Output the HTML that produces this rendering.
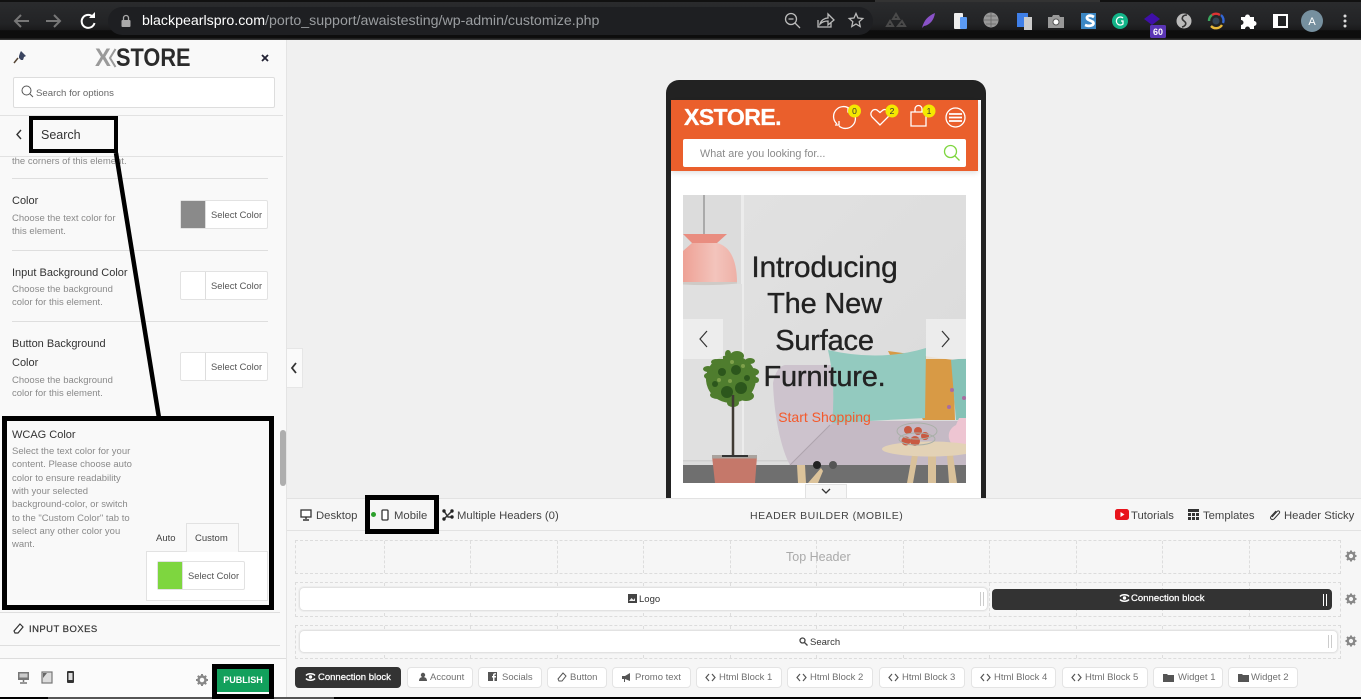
<!DOCTYPE html>
<html><head><meta charset="utf-8"><style>
html,body{margin:0;padding:0}
body{width:1361px;height:699px;overflow:hidden;position:relative;background:#f0f0f0;font-family:"Liberation Sans",sans-serif;color:#222}
.a,.t,svg.a{position:absolute}
.t{white-space:nowrap}
.h{font-size:11px;line-height:14px;color:#333;left:12px}
.d{font-size:9.5px;line-height:13px;color:#8a8a8a;left:12px}
.hr{position:absolute;left:12px;width:256px;height:1px;background:#dedede}
.sel{position:absolute;left:180px;width:86px;height:27px;background:#fff;border:1px solid #e2e2e2;border-radius:2px}
.sel i{position:absolute;left:0;top:0;width:24px;height:27px;border-right:1px solid #ddd}
.sel span{position:absolute;left:30px;top:7px;font-size:9.4px;line-height:13px;color:#555;white-space:nowrap}
.blk{position:absolute;border:4px solid #000;box-sizing:border-box}
.cell{position:absolute;top:0;bottom:0;border-left:1px dashed #ddd}
.row{position:absolute;left:295px;width:1046px;border:1px dashed #dcdcdc;box-sizing:border-box}
.chip{position:absolute;top:667px;height:21px;box-sizing:border-box;background:#fff;border:1px solid #e4e4e4;border-radius:4px;font-size:9.5px;line-height:19px;color:#707070;white-space:nowrap}
.chip svg{position:absolute;top:4px}
.chip span{position:absolute;top:0}
.tb{font-size:11.3px;line-height:14px;color:#444;top:509px}
.hd{font-size:30px;line-height:36px;color:#222;text-align:center;left:683px;width:283px;letter-spacing:-.2px;-webkit-text-stroke:.35px #222}
</style></head><body>

<!-- browser chrome -->
<div class="a" style="left:0;top:0;width:1361px;height:40px;background:linear-gradient(#2b2c2e 0,#222325 60%,#1a1a1b 75%,#0d0d0d 76%,#0d0d0d 96%,#333 97%)"></div>
<div class="a" style="left:0;top:0;width:1361px;height:2px;background:#111"></div>
<div class="a" style="left:875px;top:0;width:225px;height:2px;background:#333"></div>
<div class="a" style="left:108px;top:7px;width:765px;height:28px;border-radius:14px;background:#1e1f22"></div>
<svg class="a" style="left:10px;top:10px" width="90" height="22" viewBox="0 0 90 22" fill="none" stroke-width="2">
<path d="M19 11H6M11 5l-6 6 6 6" stroke="#777"/><path d="M36 11h13M44 5l6 6-6 6" stroke="#777"/>
<path d="M83 7a6.500 6.500 0 1 0 1.500 6" stroke="#fff"/><path d="M79 8h6V2z" fill="#fff"/></svg>
<svg class="a" style="left:120px;top:14px" width="12" height="14" viewBox="0 0 12 14"><rect x="1.500" y="6" width="9" height="7" rx="1" fill="#aaa"/><path d="M3.500 6V4a2.500 2.500 0 0 1 5 0v2" stroke="#aaa" fill="none" stroke-width="1.300"/></svg>
<div class="t" style="left:142px;top:13px;font-size:14.2px;line-height:17px;color:#fff">blackpearlspro.com<span style="color:#9a9da0">/porto_support/awaistesting/wp-admin/customize.php</span></div>
<svg class="a" style="left:782px;top:11px" width="85" height="20" viewBox="0 0 85 20" fill="none" stroke="#bbb" stroke-width="1.300">
<circle cx="9" cy="8" r="5.500"/><path d="M13 12l5 5M6.500 8h5"/><path d="M36 9v7h13v-4M38 13c1-4 5-6 8-6V3l6 6-6 5v-4c-3 0-6 1-8 3z"/>
<path d="M74 2.500l2 4.500 4.800.5-3.600 3.200 1 4.800-4.200-2.500-4.200 2.500 1-4.800-3.600-3.200 4.800-.5z"/></svg>
<!-- extensions -->
<svg class="a" style="left:885px;top:5px" width="476" height="34" viewBox="885 5 476 34">
<path d="M896 14l-3 5h6zM890 21l-3 5h6zM902 21l3 5h-7z" fill="none" stroke="#4a4a4a" stroke-width="2"/>
<path d="M922 28c2-8 6-12 13-15-1 7-5 12-11 13z" fill="#8a52c8"/>
<rect x="954" y="13" width="9" height="16" rx="1" fill="#eee"/><rect x="960" y="17" width="7" height="12" rx="1" fill="#5b9bf5"/>
<circle cx="991" cy="20" r="7.500" fill="#999"/><path d="M984 20h15M991 13v15M986 16h10M986 24h10" stroke="#666" stroke-width=".8"/>
<rect x="1017" y="13" width="11" height="14" fill="#3f7fe8"/><rect x="1024" y="17" width="8" height="13" fill="#ccc"/>
<path d="M1048 17h4l1-2h6l1 2h4v11h-16z" fill="#999"/><circle cx="1056" cy="22" r="3" fill="#fff" stroke="#555"/>
<rect x="1081" y="13" width="15" height="16" fill="#3b87c4"/><path d="M1094 17c-5-3-9 0-6 2.500l5 2.500c2 3-3 5-8 3" stroke="#fff" stroke-width="2.800" fill="none"/>
<circle cx="1120" cy="21" r="8" fill="#12b488"/><path d="M1123 18a4 4 0 1 0 0 6v-3h-2" stroke="#fff" fill="none" stroke-width="1.300"/>
<path d="M1152 13l8 6-8 6-8-6z" fill="#3f0fa8"/><rect x="1150" y="25" width="16" height="13" rx="1.500" fill="#5a35b5"/>
<circle cx="1184" cy="21" r="7.500" fill="#bbb"/><path d="M1187 15c-5 0-6 4-3 6s2 5-2 6" stroke="#333" stroke-width="1.600" fill="none"/>
<path d="M1209 21a7 7 0 0 1 3-6" stroke="#3ba55d" stroke-width="2.400" fill="none"/><path d="M1212 15a7 7 0 0 1 8 0" stroke="#d33" stroke-width="2.400" fill="none"/><path d="M1221 15a7 7 0 0 1 2 8" stroke="#3367d6" stroke-width="2.400" fill="none"/><path d="M1222 25a7 7 0 0 1-11 1" stroke="#e8b93a" stroke-width="2.400" fill="none"/><circle cx="1216" cy="21" r="3.500" fill="#345"/>
<path d="M1241 17h4a2.500 2.500 0 0 1 5 0h4v4a2.500 2.500 0 0 1 0 5v3h-4a2.500 2.500 0 0 0-5 0h-4v-4a2.500 2.500 0 0 0 0-5z" fill="#fff"/>
<rect x="1274" y="15" width="13" height="12" fill="none" stroke="#fff" stroke-width="2"/><rect x="1274" y="15" width="4" height="12" fill="#fff"/>
<circle cx="1312" cy="21" r="11" fill="#76909f"/>
<circle cx="1345" cy="16" r="1.500" fill="#ddd"/><circle cx="1345" cy="21" r="1.500" fill="#ddd"/><circle cx="1345" cy="26" r="1.500" fill="#ddd"/>
<text x="1158" y="35" font-family="Liberation Sans" font-size="9" font-weight="bold" fill="#fff" text-anchor="middle">60</text>
<text x="1312" y="25" font-family="Liberation Sans" font-size="11" fill="#fff" text-anchor="middle">A</text>
</svg>

<!-- sidebar -->
<div class="a" style="left:0;top:40px;width:287px;height:657px;background:#f9f9f9;border-right:1px solid #e4e4e4;box-sizing:border-box"></div>
<svg class="a" style="left:13px;top:50px" width="14" height="14" viewBox="0 0 14 14"><path d="M8 1l5 5-2 1-1 3-2 0-2-2 0-2 1-3z" fill="#3a4560"/><path d="M5 8L1 13" stroke="#543" stroke-width="1.500"/></svg>
<div class="t" style="left:95px;top:44px;font-size:25px;line-height:28px;font-weight:bold;color:#9a9a9a;transform:scaleX(.95);transform-origin:0 0">X</div>
<svg class="a" style="left:108px;top:48px" width="9" height="20" viewBox="0 0 9 20"><path d="M7.500 1L2 10l5.500 9" fill="none" stroke="#9a9a9a" stroke-width="2"/></svg>
<div class="t" style="left:116px;top:44px;font-size:25px;line-height:28px;font-weight:bold;color:#2b2b2b;transform:scaleX(.87);transform-origin:0 0">STORE</div>
<svg class="a" style="left:261px;top:54px" width="8" height="8" viewBox="0 0 8 8"><path d="M1 1l6 6M7 1L1 7" stroke="#223" stroke-width="1.800"/></svg>
<div class="a" style="left:13px;top:77px;width:262px;height:31px;background:#fff;border:1px solid #ddd;border-radius:2px;box-sizing:border-box"></div>
<svg class="a" style="left:21px;top:85px" width="13" height="13" viewBox="0 0 13 13" fill="none" stroke="#555"><circle cx="5.500" cy="5.500" r="4.500"/><path d="M9 9l3 3"/></svg>
<div class="t" style="left:36px;top:87px;font-size:9.600px;line-height:13px;color:#666">Search for options</div>
<div class="a" style="left:0;top:115px;width:283px;height:1px;background:#e2e2e2"></div>
<div class="a" style="left:0;top:156px;width:283px;height:1px;background:#e2e2e2"></div>
<svg class="a" style="left:15px;top:129px" width="8" height="11" viewBox="0 0 8 11"><path d="M6 1L2 5.500 6 10" fill="none" stroke="#333" stroke-width="1.400"/></svg>
<div class="t" style="left:41px;top:128px;font-size:12.500px;line-height:15px;color:#333">Search</div>
<div class="t d" style="top:155px;height:11px;overflow:hidden">the corners of this element.</div>
<div class="hr" style="top:178px"></div>

<div class="t h" style="top:194px">Color</div>
<div class="t d" style="top:212px">Choose the text color for</div>
<div class="t d" style="top:225px">this element.</div>
<div class="sel" style="top:200px"><i style="background:#8a8a8a"></i><span>Select Color</span></div>
<div class="hr" style="top:250px"></div>

<div class="t h" style="top:266px">Input Background Color</div>
<div class="t d" style="top:283px">Choose the background</div>
<div class="t d" style="top:296px">color for this element.</div>
<div class="sel" style="top:271px"><i></i><span>Select Color</span></div>
<div class="hr" style="top:321px"></div>

<div class="t h" style="top:337px">Button Background</div>
<div class="t h" style="top:356px">Color</div>
<div class="t d" style="top:374px">Choose the background</div>
<div class="t d" style="top:387px">color for this element.</div>
<div class="sel" style="top:352px"><i></i><span>Select Color</span></div>

<div class="t h" style="top:428px">WCAG Color</div>
<div class="t d" style="top:445px">Select the text color for your</div>
<div class="t d" style="top:458px">content. Please choose auto</div>
<div class="t d" style="top:472px">color to ensure readability</div>
<div class="t d" style="top:485px">with your selected</div>
<div class="t d" style="top:498px">background-color, or switch</div>
<div class="t d" style="top:512px">to the "Custom Color" tab to</div>
<div class="t d" style="top:525px">select any other color you</div>
<div class="t d" style="top:538px">want.</div>
<div class="t" style="left:156px;top:532px;font-size:9.500px;line-height:13px;color:#444">Auto</div>
<div class="a" style="left:186px;top:523px;width:53px;height:29px;box-sizing:border-box;border:1px solid #e2e2e2;border-bottom:0;background:#f9f9f9"></div>
<div class="t" style="left:195px;top:532px;font-size:9.500px;line-height:13px;color:#444">Custom</div>
<div class="a" style="left:146px;top:551px;width:122px;height:50px;box-sizing:border-box;background:#fff;border:1px solid #e2e2e2"></div>
<div class="a" style="left:187px;top:551px;width:51px;height:1px;background:#f9f9f9"></div>
<div class="sel" style="left:157px;top:561px"><i style="background:#7ed63f"></i><span>Select Color</span></div>

<div class="a" style="left:0;top:612px;width:280px;height:1px;background:#dedede"></div>
<svg class="a" style="left:13px;top:623px" width="11" height="11" viewBox="0 0 11 11"><path d="M7 1l3 3-5 6-3 0-1-2z" fill="#fff" stroke="#333" stroke-width="1.200"/></svg>
<div class="t" style="left:29px;top:623px;font-size:9.500px;line-height:13px;letter-spacing:.45px;color:#333;-webkit-text-stroke:.2px #333">INPUT BOXES</div>
<div class="a" style="left:0;top:645px;width:280px;height:1px;background:#dedede"></div>
<div class="a" style="left:280px;top:430px;width:6px;height:56px;border-radius:3px;background:#aeaeae"></div>
<!-- sidebar footer -->
<div class="a" style="left:0;top:658px;width:286px;height:39px;background:#fbfbfb;border-top:1px solid #ddd;box-sizing:border-box"></div>
<svg class="a" style="left:16px;top:670px" width="62" height="16" viewBox="0 0 62 16"><rect x="2" y="2" width="11" height="8" fill="#777"/><rect x="3.500" y="3.500" width="8" height="4" fill="#ccc"/><path d="M7.500 10v2M4 13h7" stroke="#777" stroke-width="1.500"/><rect x="26" y="2" width="10" height="11" fill="#ddd" stroke="#777" stroke-width="1.200"/><path d="M27 8l4-5h-4z" fill="#666"/><rect x="51" y="1" width="7" height="12" rx="1" fill="#333"/><rect x="52.500" y="3" width="4" height="7" fill="#ddd"/></svg>
<svg class="a" style="left:195px;top:673px" width="14" height="14" viewBox="0 0 14 14"><circle cx="7" cy="7" r="3.500" fill="none" stroke="#888" stroke-width="2.500"/><path d="M7 1v2.500M7 10.500V13M1 7h2.500M10.500 7H13M2.800 2.800l1.700 1.700M9.500 9.500l1.700 1.700M11.200 2.800L9.500 4.500M4.500 9.500l-1.700 1.700" stroke="#888" stroke-width="2"/></svg>
<div class="a" style="left:217px;top:669px;width:52px;height:23px;background:#12a05c"></div>
<div class="t" style="left:217px;top:669px;width:52px;text-align:center;font-size:9px;line-height:23px;font-weight:bold;color:#fff">PUBLISH</div>
<!-- collapse tab -->
<div class="a" style="left:287px;top:348px;width:16px;height:40px;background:#fafafa;border:1px solid #e6e6e6;border-left:0;box-sizing:border-box"></div>
<svg class="a" style="left:290px;top:362px" width="8" height="12" viewBox="0 0 8 12"><path d="M6 1L2 6l4 5" fill="none" stroke="#333" stroke-width="1.800"/></svg>

<!-- phone -->
<div class="a" style="left:666px;top:80px;width:320px;height:418px;background:#222;border-radius:13px 13px 0 0"></div>
<div class="a" style="left:671px;top:100px;width:310px;height:398px;background:#fff"></div>
<div class="a" style="left:671px;top:100px;width:307px;height:71px;background:#ea5f2c;box-shadow:0 2px 5px rgba(0,0,0,.12)"></div>
<div class="t" style="left:684px;top:103px;font-size:23px;line-height:28px;font-weight:bold;color:#fff;letter-spacing:-.5px;-webkit-text-stroke:.3px #fff">XSTORE.</div>
<svg class="a" style="left:830px;top:103px" width="140" height="28" viewBox="830 103 140 28" fill="none" stroke="#fff" stroke-width="1.300">
<path d="M837 124a8.500 8.500 0 0 1 13-15M852 111a8.500 8.500 0 0 1-13 15M839 121v4h-4M848 108v4h5"/>
<path d="M880 125l-8-8c-3-4 1-9 5-7l3 2.500 3-2.500c4-2 8 3 5 7z"/>
<path d="M911 112h15v14h-15zM915 112v-3a3.500 3.500 0 0 1 7 0v3"/>
<circle cx="955.500" cy="117.500" r="9.500"/><path d="M949 114h13M949 117.500h13M949 121h13" stroke-width="1.800"/>
<circle cx="854.500" cy="111" r="6.500" fill="#f4e800" stroke="none"/><circle cx="892" cy="111" r="6.500" fill="#f4e800" stroke="none"/><circle cx="929" cy="111" r="6.500" fill="#f4e800" stroke="none"/>
<g font-family="Liberation Sans" font-size="8.500" fill="#333" stroke="none" text-anchor="middle"><text x="854.500" y="114">0</text><text x="892" y="114">2</text><text x="929" y="114">1</text></g></svg>
<div class="a" style="left:683px;top:139px;width:283px;height:28px;background:#fff;border-radius:2px"></div>
<div class="t" style="left:700px;top:147px;font-size:10.800px;line-height:14px;color:#8a8a8a">What are you looking for...</div>
<svg class="a" style="left:943px;top:144px" width="18" height="18" viewBox="0 0 18 18" fill="none" stroke="#7ed63f" stroke-width="1.300"><circle cx="7.500" cy="7.500" r="6"/><path d="M12 12l4.500 4.500"/></svg>

<!-- hero -->
<svg class="a" style="left:683px;top:195px" width="283" height="288" viewBox="683 195 283 288">
<defs><linearGradient id="w" x1="0" y1="0" x2="1" y2="1"><stop offset="0" stop-color="#e2e2e2"/><stop offset="1" stop-color="#dadada"/></linearGradient>
<linearGradient id="l" x1="0" x2="1"><stop offset="0" stop-color="#eea195"/><stop offset=".6" stop-color="#f3c4bc"/><stop offset="1" stop-color="#eeb0a6"/></linearGradient></defs>
<rect x="683" y="195" width="283" height="288" fill="url(#w)"/>
<rect x="683" y="195" width="59" height="270" fill="#dcdcdc"/><rect x="741" y="195" width="3" height="270" fill="#ececec"/>
<rect x="683" y="284" width="59" height="176" fill="#e0e0e0"/>
<rect x="683" y="460" width="110" height="1.500" fill="#cfcfcf"/>
<path d="M704 195v40" stroke="#777"/>
<path d="M683 234h44l-10 9h-25z" fill="#e98d80"/><path d="M692 243h25c12 3 20 15 20 40h-54v-32z" fill="url(#l)"/><path d="M683 282h54v1.500c-18 2-36 2-54 1z" fill="#cfcac6"/>
<!-- floor -->
<rect x="683" y="465" width="283" height="18" fill="#6f6f6f"/>
<!-- plant -->
<g fill="#4f7d2e">
<ellipse cx="731" cy="379" rx="25" ry="24"/><ellipse cx="712" cy="376" rx="8" ry="4"/><ellipse cx="708" cy="369" rx="5" ry="3"/><ellipse cx="752" cy="372" rx="7" ry="4"/><ellipse cx="756" cy="380" rx="3" ry="3"/><ellipse cx="737" cy="356" rx="7" ry="5"/><ellipse cx="728" cy="354" rx="3" ry="4"/><ellipse cx="718" cy="395" rx="8" ry="4"/><ellipse cx="746" cy="396" rx="8" ry="5"/><ellipse cx="733" cy="403" rx="6" ry="4"/><ellipse cx="716" cy="362" rx="5" ry="3"/><ellipse cx="750" cy="361" rx="5" ry="3"/></g>
<g fill="#2c561c"><circle cx="727" cy="392" r="6"/><circle cx="741" cy="388" r="6"/><circle cx="722" cy="372" r="4"/><circle cx="736" cy="370" r="5"/><circle cx="747" cy="378" r="3"/><circle cx="715" cy="384" r="3"/></g>
<g fill="#7ea04a"><circle cx="732" cy="362" r="2"/><circle cx="743" cy="366" r="2"/><circle cx="719" cy="380" r="2"/><circle cx="730" cy="381" r="2"/></g>
<path d="M733 395v63" stroke="#3f3a33" stroke-width="2.500"/>
<path d="M712 456h45l-2 27h-40z" fill="#c5786a"/><rect x="712" y="455" width="45" height="3.500" fill="#a9a39e"/><rect x="722" y="455" width="26" height="2" fill="#333"/>
<!-- sofa -->
<path d="M773 383c2-10 6-17 12-18h46l5 56h130v44H790c-9-16-16-50-17-82z" fill="#cdc3cd"/>
<path d="M830 425l-40 40h176v-44H836z" fill="#c5bac5"/><path d="M830 425l-40 40" stroke="#aea3ad"/>
<path d="M797 465h8l1 18h-8zM808 483l13-15 2 3-5 12z" fill="#dcc39a"/>
<path d="M888 351l65 9 2 60h-32z" fill="#d89a45"/>
<path d="M828 350Q880 362 926 348L925 418 832 423Q836 385 828 350z" fill="#93cabf"/>
<path d="M951 360l15-2v62h-10z" fill="#85c2b6"/>
<!-- vase -->
<path d="M959 418h7v28h-11c-8-4-9-16 1-21z" fill="#eec5d2"/>
<g fill="#a86ca0"><circle cx="952" cy="390" r="2"/><circle cx="949" cy="407" r="2"/><circle cx="964" cy="398" r="2"/></g>
<!-- table -->
<path d="M912 455h6l-5 28h-6zM947 455h6l4 28h-8zM928 455h8v28h-8z" fill="#d9c19a"/>
<ellipse cx="930" cy="449" rx="48" ry="7.500" fill="#e3d2b6"/>
<!-- fruit -->
<g fill="#c85a42"><circle cx="906" cy="441" r="4.500"/><circle cx="915" cy="441" r="5"/><circle cx="925" cy="436" r="4"/><circle cx="908" cy="430" r="4"/><circle cx="918" cy="431" r="4"/></g>
<ellipse cx="917" cy="431" rx="20" ry="8" fill="none" stroke="#a9b0a8"/><ellipse cx="917" cy="439" rx="18" ry="6" fill="none" stroke="#a9b0a8"/>
<!-- nav -->
<rect x="683" y="319" width="40" height="40" fill="#eee" opacity=".85"/><rect x="926" y="319" width="40" height="40" fill="#eee" opacity=".85"/>
<path d="M707 331l-7 8 7 8M942 331l7 8-7 8" fill="none" stroke="#333" stroke-width="1.200"/>
<circle cx="817" cy="465" r="4" fill="#222"/><circle cx="833" cy="465" r="4" fill="#555"/>
</svg>
<div class="t hd" style="top:250px">Introducing</div>
<div class="t hd" style="top:286px;font-size:29px">The New</div>
<div class="t hd" style="top:323px;font-size:29px">Surface</div>
<div class="t hd" style="top:359px;font-size:29px">Furniture.</div>
<div class="t" style="left:683px;width:283px;top:408px;text-align:center;font-size:14px;line-height:18px;color:#f4592b">Start Shopping</div>
<div class="a" style="left:805px;top:484px;width:42px;height:15px;background:#f7f7f7;border:1px solid #e2e2e2;box-sizing:border-box"></div>
<svg class="a" style="left:821px;top:488px" width="10" height="7" viewBox="0 0 10 7"><path d="M1 1l4 4 4-4" fill="none" stroke="#333" stroke-width="1.300"/></svg>

<!-- builder -->
<div class="a" style="left:287px;top:498px;width:1074px;height:199px;background:#f6f6f6;border-top:1px solid #e2e2e2;box-sizing:border-box"></div>
<div class="a" style="left:287px;top:530px;width:1074px;height:1px;background:#e2e2e2"></div>
<svg class="a" style="left:300px;top:508px" width="12" height="14" viewBox="0 0 12 14"><rect x="1" y="2" width="10" height="7" fill="#fff" stroke="#333" stroke-width="1.300"/><path d="M6 9v2M3 12h6" stroke="#333" stroke-width="1.400"/></svg>
<div class="t tb" style="left:316px">Desktop</div>
<div class="a" style="left:371px;top:512px;width:5px;height:5px;border-radius:50%;background:#2ca02c"></div>
<svg class="a" style="left:381px;top:509px" width="8" height="12" viewBox="0 0 8 12"><rect x="1" y="1" width="6" height="10" rx="1" fill="#fff" stroke="#333" stroke-width="1.300"/></svg>
<div class="t tb" style="left:394px">Mobile</div>
<svg class="a" style="left:442px;top:509px" width="12" height="12" viewBox="0 0 12 12"><path d="M2 2l4 6h4M2 10l8-8" stroke="#333" stroke-width="1.500" fill="none"/><circle cx="2" cy="2" r="1.700" fill="#222"/><circle cx="2" cy="10" r="1.700" fill="#222"/><circle cx="10" cy="2" r="1.700" fill="#222"/><circle cx="10" cy="8" r="1.700" fill="#222"/></svg>
<div class="t tb" style="left:457px">Multiple Headers (0)</div>
<div class="t tb" style="left:750px;letter-spacing:.5px;font-size:10.500px">HEADER BUILDER (MOBILE)</div>
<svg class="a" style="left:1115px;top:509px" width="14" height="11" viewBox="0 0 14 11"><rect width="14" height="11" rx="2.500" fill="#e8141c"/><path d="M5.500 3l4 2.500-4 2.500z" fill="#fff"/></svg>
<div class="t tb" style="left:1131px">Tutorials</div>
<svg class="a" style="left:1188px;top:509px" width="11" height="11" viewBox="0 0 11 11" fill="#333"><rect width="11" height="3"/><rect y="4" width="3" height="3"/><rect x="4" y="4" width="3" height="3"/><rect x="8" y="4" width="3" height="3"/><rect y="8" width="3" height="3"/><rect x="4" y="8" width="3" height="3"/><rect x="8" y="8" width="3" height="3"/></svg>
<div class="t tb" style="left:1203px">Templates</div>
<svg class="a" style="left:1269px;top:509px" width="12" height="12" viewBox="0 0 12 12"><path d="M3 8l5-5.500c2-1.500 3.500.5 2 2L5 10c-2 1.500-4.500-.5-3-2.500L7 2" fill="none" stroke="#333"/></svg>
<div class="t tb" style="left:1284px">Header Sticky</div>

<!-- rows -->
<div class="row" style="top:540px;height:34px"><i class="cell" style="left:88px"></i><i class="cell" style="left:174px"></i><i class="cell" style="left:261px"></i><i class="cell" style="left:347px"></i><i class="cell" style="left:434px"></i><i class="cell" style="left:520px"></i><i class="cell" style="left:607px"></i><i class="cell" style="left:693px"></i><i class="cell" style="left:780px"></i><i class="cell" style="left:866px"></i><i class="cell" style="left:953px"></i></div>
<div class="t" style="left:786px;top:550px;font-size:12.500px;line-height:15px;color:#aaa">Top Header</div>
<div class="row" style="top:582px;height:35px"><i class="cell" style="left:88px"></i><i class="cell" style="left:174px"></i><i class="cell" style="left:261px"></i><i class="cell" style="left:347px"></i><i class="cell" style="left:434px"></i><i class="cell" style="left:520px"></i><i class="cell" style="left:607px"></i><i class="cell" style="left:693px"></i><i class="cell" style="left:780px"></i><i class="cell" style="left:866px"></i><i class="cell" style="left:953px"></i></div>
<div class="row" style="top:625px;height:34px"><i class="cell" style="left:88px"></i><i class="cell" style="left:174px"></i><i class="cell" style="left:261px"></i><i class="cell" style="left:347px"></i><i class="cell" style="left:434px"></i><i class="cell" style="left:520px"></i><i class="cell" style="left:607px"></i><i class="cell" style="left:693px"></i><i class="cell" style="left:780px"></i><i class="cell" style="left:866px"></i><i class="cell" style="left:953px"></i></div>

<div class="a" style="left:299px;top:587px;width:689px;height:24px;background:#fff;border:1px solid #e2e2e2;border-radius:5px;box-sizing:border-box;box-shadow:0 0 0 1px #eee"></div>
<svg class="a" style="left:628px;top:594px" width="9" height="9" viewBox="0 0 9 9"><rect width="9" height="9" fill="#444"/><path d="M1 7l2.500-3 2 2L7 4v3z" fill="#eee"/></svg>
<div class="t" style="left:639px;top:593px;font-size:9.500px;line-height:13px;color:#333">Logo</div>
<div class="a" style="left:980px;top:592px;width:4px;height:14px;border-left:1px solid #ccc;border-right:1px solid #ccc;box-sizing:border-box"></div>
<div class="a" style="left:992px;top:589px;width:340px;height:21px;background:#333;border-radius:4px"></div>
<svg class="a" style="left:1119px;top:593px" width="11" height="10" viewBox="0 0 11 10"><path d="M1 3.500a5 3 0 0 1 9 0M10 6.500a5 3 0 0 1-9 0" fill="none" stroke="#fff" stroke-width="1.500"/><circle cx="5.500" cy="5" r="1.700" fill="#fff"/></svg>
<div class="t" style="left:1131px;top:592px;font-size:9.500px;line-height:13px;color:#fff;letter-spacing:.04px;-webkit-text-stroke:.25px #fff">Connection block</div>
<div class="a" style="left:1323px;top:594px;width:4px;height:12px;border-left:1px solid #fff;border-right:1px solid #fff;box-sizing:border-box"></div>

<div class="a" style="left:299px;top:630px;width:1039px;height:23px;background:#fff;border:1px solid #e2e2e2;border-radius:5px;box-sizing:border-box;box-shadow:0 0 0 1px #eee"></div>
<svg class="a" style="left:799px;top:637px" width="9" height="9" viewBox="0 0 9 9" fill="none" stroke="#444" stroke-width="1.300"><circle cx="3.500" cy="3.500" r="2.500"/><path d="M5.500 5.500l3 3"/></svg>
<div class="t" style="left:810px;top:636px;font-size:9.500px;line-height:13px;color:#333">Search</div>
<div class="a" style="left:1328px;top:635px;width:4px;height:13px;border-left:1px solid #ccc;border-right:1px solid #ccc;box-sizing:border-box"></div>

<svg class="a" style="left:1344px;top:549px" width="14" height="100" viewBox="0 0 14 100">
<defs><g id="g"><circle cx="7" cy="7" r="3.300" fill="none" stroke="#888" stroke-width="2.400"/><path d="M7 1.500v2M7 10.500v2M1.500 7h2M10.500 7h2M3 3l1.500 1.500M9.500 9.500L11 11M11 3L9.500 4.500M4.500 9.500L3 11" stroke="#888" stroke-width="2"/></g></defs>
<use href="#g"/><use href="#g" y="43"/><use href="#g" y="85"/></svg>

<!-- chips -->
<div class="chip" style="left:295px;width:106px;background:#333;border-color:#333;color:#fff;-webkit-text-stroke:.25px #fff"><svg style="left:9px" width="11" height="10" viewBox="0 0 11 10"><path d="M1 3.500a5 3 0 0 1 9 0M10 6.500a5 3 0 0 1-9 0" fill="none" stroke="#fff" stroke-width="1.500"/><circle cx="5.500" cy="5" r="1.700" fill="#fff"/></svg><span style="left:22px">Connection block</span></div>
<div class="chip" style="left:407px;width:66px"><svg style="left:10px" width="10" height="10" viewBox="0 0 10 10" fill="#555"><circle cx="5" cy="3" r="2.200"/><path d="M1 9c0-3 2-4 4-4s4 1 4 4z"/></svg><span style="left:22px">Account</span></div>
<div class="chip" style="left:478px;width:64px"><svg style="left:9px" width="10" height="10" viewBox="0 0 10 10"><rect width="9" height="9" fill="#555"/><path d="M6.500 9V5.500H8V4H6.500V3c0-.5.500-.5 1.500-.5V1.200C6 1 5 1.800 5 3v1H4v1.500h1V9z" fill="#fff"/></svg><span style="left:23px">Socials</span></div>
<div class="chip" style="left:547px;width:60px"><svg style="left:9px" width="10" height="10" viewBox="0 0 10 10"><path d="M6 1l3 3-4 5-3 0-1-2z" fill="#fff" stroke="#555"/></svg><span style="left:22px">Button</span></div>
<div class="chip" style="left:612px;width:79px"><svg style="left:8px" width="11" height="11" viewBox="0 0 11 11"><path d="M1 4h3l5-3v8L4 7v3H3V7H1z" fill="#555"/></svg><span style="left:22px">Promo text</span></div>
<div class="chip" style="left:696px;width:86px"><svg style="left:8px;top:5px" width="11" height="9" viewBox="0 0 11 9"><path d="M4 1L1 4.500 4 8M7 1l3 3.500L7 8" fill="none" stroke="#555" stroke-width="1.200"/></svg><span style="left:22px">Html Block 1</span></div>
<div class="chip" style="left:787px;width:86px"><svg style="left:8px;top:5px" width="11" height="9" viewBox="0 0 11 9"><path d="M4 1L1 4.500 4 8M7 1l3 3.500L7 8" fill="none" stroke="#555" stroke-width="1.200"/></svg><span style="left:22px">Html Block 2</span></div>
<div class="chip" style="left:879px;width:86px"><svg style="left:8px;top:5px" width="11" height="9" viewBox="0 0 11 9"><path d="M4 1L1 4.500 4 8M7 1l3 3.500L7 8" fill="none" stroke="#555" stroke-width="1.200"/></svg><span style="left:22px">Html Block 3</span></div>
<div class="chip" style="left:971px;width:85px"><svg style="left:8px;top:5px" width="11" height="9" viewBox="0 0 11 9"><path d="M4 1L1 4.500 4 8M7 1l3 3.500L7 8" fill="none" stroke="#555" stroke-width="1.200"/></svg><span style="left:22px">Html Block 4</span></div>
<div class="chip" style="left:1062px;width:86px"><svg style="left:8px;top:5px" width="11" height="9" viewBox="0 0 11 9"><path d="M4 1L1 4.500 4 8M7 1l3 3.500L7 8" fill="none" stroke="#555" stroke-width="1.200"/></svg><span style="left:22px">Html Block 5</span></div>
<div class="chip" style="left:1153px;width:70px"><svg style="left:9px;top:5px" width="11" height="9" viewBox="0 0 11 9"><path d="M0 1h4l1 1h6v7H0z" fill="#555"/></svg><span style="left:24px">Widget 1</span></div>
<div class="chip" style="left:1228px;width:70px"><svg style="left:9px;top:5px" width="11" height="9" viewBox="0 0 11 9"><path d="M0 1h4l1 1h6v7H0z" fill="#555"/></svg><span style="left:22px">Widget 2</span></div>

<!-- bottom strip -->
<div class="a" style="left:0;top:697px;width:1361px;height:2px;background:#000"></div>
<div class="a" style="left:48px;top:697px;width:286px;height:2px;background:#555"></div>

<!-- black annotations -->
<svg class="a" style="left:0;top:0" width="1361" height="699" viewBox="0 0 1361 699"><path d="M116 153L159 418" stroke="#000" stroke-width="4.500"/></svg>
<div class="blk" style="left:29px;top:116px;width:89px;height:37px"></div>
<div class="blk" style="left:2px;top:416px;width:272px;height:194px;border-width:5px"></div>
<div class="blk" style="left:212px;top:664px;width:62px;height:35px;border-width:5px"></div>
<div class="blk" style="left:365px;top:495px;width:74px;height:39px;border-width:5px"></div>
</body></html>
